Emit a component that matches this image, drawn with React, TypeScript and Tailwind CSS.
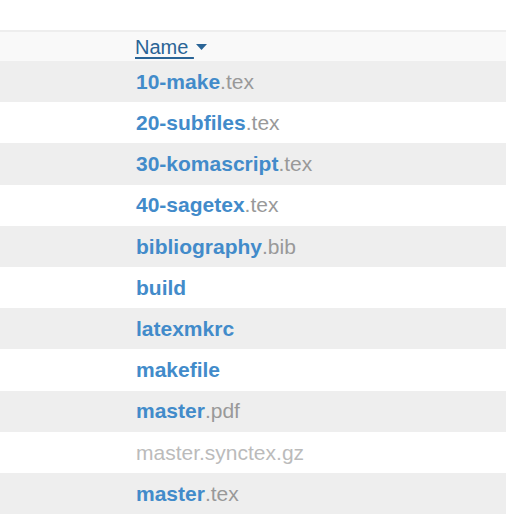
const files: { name: string; ext?: string; dim?: boolean }[] = [
  { name: "10-make", ext: ".tex" },
  { name: "20-subfiles", ext: ".tex" },
  { name: "30-komascript", ext: ".tex" },
  { name: "40-sagetex", ext: ".tex" },
  { name: "bibliography", ext: ".bib" },
  { name: "build" },
  { name: "latexmkrc" },
  { name: "makefile" },
  { name: "master", ext: ".pdf" },
  { name: "master.synctex.gz", dim: true },
  { name: "master", ext: ".tex" },
];

export default function App() {
  return (
    <div
      className="h-[520px] w-[506px] overflow-hidden bg-white text-[21px]"
      style={{ fontFamily: '"Liberation Sans", Arial, sans-serif' }}
    >
      <div className="h-[30px]" />
      <div className="flex h-[31px] items-center border-t-2 border-[#eeeeee] bg-[#f9f9f9] pl-[135px]">
        <a className="flex items-center text-[20px] text-[#2a6496]">
          <span className="underline decoration-2 underline-offset-[3px]">Name&nbsp;</span>
          <svg width="11" height="6" viewBox="0 0 11 6" className="ml-[2px] mt-[1px]">
            <path d="M0 0h11L5.5 6z" fill="#2a6496" />
          </svg>
        </a>
      </div>
      {files.map((f, i) => (
        <div
          key={i}
          className={
            "flex h-[41.2px] items-center pl-[136px] " +
            (i % 2 === 0 ? "bg-[#eeeeee]" : "bg-white")
          }
        >
          {f.dim ? (
            <span className="text-[#bbbbbb]">{f.name}</span>
          ) : (
            <span>
              <span className="font-bold text-[#428bca]">{f.name}</span>
              {f.ext && <span className="text-[#999999]">{f.ext}</span>}
            </span>
          )}
        </div>
      ))}
    </div>
  );
}
